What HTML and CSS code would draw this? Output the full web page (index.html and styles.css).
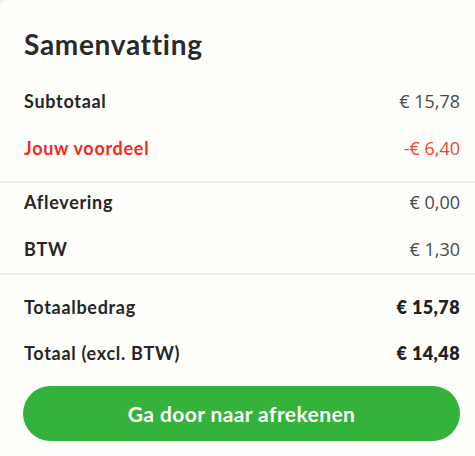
FILE: index.html
```html
<!DOCTYPE html>
<html lang="nl">
<head>
<meta charset="utf-8">
<title>Samenvatting</title>
<link rel="stylesheet" href="styles.css">
</head>
<body>
<section class="card">
  <h2 class="title">Samenvatting</h2>
  <div class="group group-first">
    <div class="row"><span class="label">Subtotaal</span><span class="value">€ 15,78</span></div>
    <div class="row discount"><span class="label">Jouw voordeel</span><span class="value">-€ 6,40</span></div>
  </div>
  <div class="group group-mid">
    <div class="row"><span class="label">Aflevering</span><span class="value">€ 0,00</span></div>
    <div class="row"><span class="label">BTW</span><span class="value">€ 1,30</span></div>
  </div>
  <div class="group group-last">
    <div class="row total"><span class="label">Totaalbedrag</span><span class="value">€ 15,78</span></div>
    <div class="row total"><span class="label">Totaal (excl. BTW)</span><span class="value">€ 14,48</span></div>
    <button class="checkout" type="button">Ga door naar afrekenen</button>
  </div>
</section>
</body>
</html>
```

FILE: styles.css
```css
html, body {
  margin: 0;
  padding: 0;
  background: #f2f2ef;
}
body {
  width: 475px;
  height: 456px;
  overflow: hidden;
  font-family: "Lato", "Noto Sans", sans-serif;
  color: #262626;
}
.card {
  background: #fefefb;
  border-radius: 8px 0 0 0;
  width: 490px;
  height: 470px;
  padding-top: 27px;
  box-sizing: border-box;
}
.title {
  margin: 0 0 0 24px;
  font-size: 28px;
  line-height: 34px;
  font-weight: 700;
  letter-spacing: 0.7px;
  color: #2a2a2a;
}
.group {
  display: flex;
  flex-direction: column;
  gap: 23px;
  padding: 0 30px 0 24px;
}
.group-first {
  padding-top: 28px;
  padding-bottom: 21px;
  border-bottom: 2px solid #efefec;
}
.group-mid {
  padding-top: 7px;
  padding-bottom: 12px;
  border-bottom: 2px solid #efefec;
}
.group-last {
  padding-top: 20px;
  gap: 22px;
}
.row {
  display: flex;
  justify-content: space-between;
  align-items: center;
  height: 24px;
  font-size: 18px;
  line-height: 24px;
}
.label {
  font-weight: 700;
  letter-spacing: 0.7px;
  color: #262626;
}
.value {
  font-family: "Open Sans", "Noto Sans", sans-serif;
  font-weight: 400;
  color: #4a4a4a;
}
.discount .label {
  color: #f9281a;
}
.discount .value {
  color: #f4452f;
}
.total .value {
  font-family: "Lato", "Noto Sans", sans-serif;
  font-weight: 800;
  letter-spacing: 0.4px;
  color: #222;
}
.checkout {
  margin-top: -1px;
  height: 55px;
  width: 437px;
  margin-left: -1px;
  border: none;
  border-radius: 28px;
  background: #33b33b;
  color: #fff;
  font-family: "Lato", "Noto Sans", sans-serif;
  font-size: 21px;
  font-weight: 700;
  letter-spacing: 0.4px;
  cursor: pointer;
}
```
